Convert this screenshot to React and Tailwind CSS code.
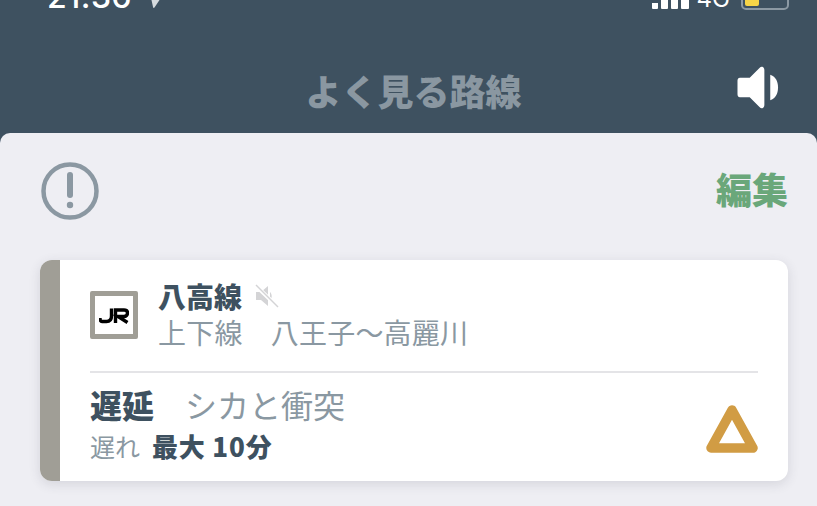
import React from 'react';

const jp = { fontFamily: '"Noto Sans CJK JP", "Noto Sans", sans-serif' };

const StatusBar = () => (
    <div className="h-[10px] flex justify-between items-end overflow-hidden text-white">
        <div className="flex items-end pl-[47px]">
            <span className="text-[32px] leading-[30px] tracking-[0.400px] font-medium translate-y-[2px]" style={{ fontFamily: '"Inter", sans-serif' }}>21:36</span>
            <svg width="9" height="10" viewBox="0 0 9 10" className="ml-[19px]">
                <path d="M0.500 0 H8.500 L3.500 7.500 Q2.500 8.500 2 7 Z" fill="#d5dade" />
            </svg>
        </div>
        <div className="flex items-end pr-[28px]">
            <div className="flex items-end gap-[3px] pb-[1px]">
                <span className="w-[6px] h-[6px] bg-white rounded-b-[1px]"></span>
                <span className="w-[7px] h-[9px] bg-white rounded-b-[1px]"></span>
                <span className="w-[7px] h-[10px] bg-white rounded-b-[1px]"></span>
                <span className="w-[8px] h-[10px] bg-white rounded-b-[1px]"></span>
            </div>
            <span className="ml-[8px] text-[24px] leading-[24px] font-normal translate-y-[1px]" style={{ fontFamily: '"Inter", sans-serif' }}>4G</span>
            <div className="ml-[11px] w-[48px] h-[20px] border-2 border-[#8c99a3] rounded-[5px] p-[2px] flex items-end">
                <span className="w-[14px] h-[14px] bg-[#f7d547] rounded-[2px]"></span>
            </div>
        </div>
    </div>
);

const Speaker = ({ size, color, className }) => (
    <svg width={size} height={size} viewBox="0 0 44 44" className={className}>
        <path d="M3 12 H13 L23 2 C25 -0.500 28 0.800 28 4 V40 C28 43.200 25 44.500 23 42 L13 32 H3 C1.500 32 0.500 31 0.500 29 V15 C0.500 13 1.500 12 3 12 Z" fill={color} />
        <path d="M34 9 C39 10.500 42 15.500 42 22 C42 28.500 39 33.500 34 35 Z" fill={color} />
    </svg>
);

const Header = () => (
    <header className="h-[123px] relative flex items-center justify-center">
        <h1 className="text-[36px] leading-none font-black text-[#8a97a1] pt-[36px] pl-[10px]" style={jp}>よく見る路線</h1>
        <div className="absolute right-[37px] top-[56px]">
            <Speaker size={43} color="#ffffff" />
        </div>
    </header>
);

const JrLogo = () => (
    <div className="w-[48px] h-[48px] -mt-[1px] border-[5px] border-[#a09e96] rounded-[2px] bg-white flex items-center justify-center shrink-0">
        <svg width="30" height="17" viewBox="0 0 30 17" fill="none" stroke="#000" strokeWidth="3.400">
            <path d="M12.500 1.500 V9 C12.500 13 10.500 14.500 7.500 14.500 H3 C1.500 14.500 1 13 1 11" />
            <path d="M16.500 16 V3 H25 C28 3 28.500 5 28.500 6 C28.500 8 27 9.500 25 9.500 H19 L28.500 15.500" />
        </svg>
    </div>
);

const Triangle = () => (
    <svg width="54" height="50" viewBox="0 0 54 50" className="shrink-0">
        <path d="M27 6 L48 44 H6 Z" fill="none" stroke="#d19c44" strokeWidth="9.500" strokeLinejoin="round" />
    </svg>
);

const Card = () => (
    <div className="ml-[40px] mr-[29px] h-[221px] flex rounded-[12px] overflow-hidden bg-white shadow-[0_3px_12px_rgba(60,60,80,0.14)]">
        <div className="w-[20px] bg-[#a09e96] shrink-0"></div>
        <div className="flex-1 pl-[30px] pr-[30px]">
            <div className="h-[113px] flex items-center gap-[20px] border-b-2 border-[#e4e4e7]">
                <JrLogo />
                <div className="-mt-[3px]">
                    <div className="flex items-center gap-[13px]">
                        <span className="text-[28px] leading-[35px] font-black text-[#3e5160]" style={jp}>八高線</span>
                        <svg width="24" height="24" viewBox="0 0 24 24">
                            <path d="M1 8 H6 L13 2 V22 L6 16 H1 Z" fill="#d4d4d6" />
                            <path d="M15 8 C17 9.500 17.500 14.500 15 16 Z" fill="#d4d4d6" />
                            <path d="M0 1 L23 23" stroke="#ffffff" strokeWidth="4" />
                            <path d="M1 1 L23 23" stroke="#d4d4d6" strokeWidth="1.500" />
                        </svg>
                    </div>
                    <div className="text-[28px] leading-[36px] tracking-[0.200px] text-[#8a98a2] whitespace-pre" style={jp}>上下線　八王子〜高麗川</div>
                </div>
            </div>
            <div className="flex items-start justify-between pt-[8px]">
                <div>
                    <div className="flex items-center gap-[31px] text-[32px] leading-[46px]" style={jp}>
                        <span className="font-black text-[#3e5160]">遅延</span>
                        <span className="text-[#8a98a2]">シカと衝突</span>
                    </div>
                    <div className="flex items-center gap-[12px] mt-[1px] leading-[36px]" style={jp}>
                        <span className="text-[25px] text-[#8a98a2]">遅れ</span>
                        <span className="text-[26px] font-black tracking-[0.800px] text-[#3e5160]">最大 10分</span>
                    </div>
                </div>
                <div className="-mr-[1px] mt-[23px]"><Triangle /></div>
            </div>
        </div>
    </div>
);

const App = () => (
    <div className="w-[817px] h-[506px] overflow-hidden bg-[#3e5160]">
        <StatusBar />
        <Header />
        <main className="h-[373px] bg-[#eeeef3] rounded-t-[10px]">
            <div className="h-[127px] flex items-start justify-between pr-[29px] pl-[41px] pt-[29px]">
                <svg width="58" height="58" viewBox="0 0 58 58">
                    <circle cx="29" cy="29" r="26.500" fill="none" stroke="#8b98a2" strokeWidth="4.500" />
                    <path d="M29 13 V33" stroke="#8b98a2" strokeWidth="6" strokeLinecap="round" />
                    <circle cx="29" cy="43" r="3.200" fill="#8b98a2" />
                </svg>
                <span className="text-[36px] leading-[52px] font-black text-[#6aa77a]" style={jp}>編集</span>
            </div>
            <Card />
        </main>
    </div>
);

export default App;
